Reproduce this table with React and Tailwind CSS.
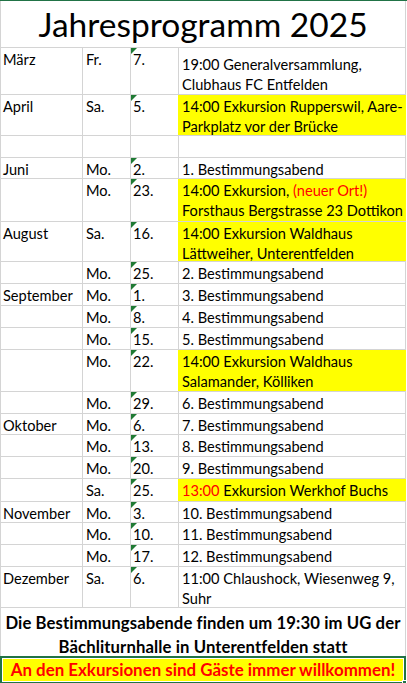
const grid = "border-[#d4d4d4]";

const rows = [
  { m: "März", d: "Fr.", n: "7.", h: 47, lines: ["19:00 Generalversammlung,", "Clubhaus FC Entfelden"], pt: "pt-[7px]" },
  { m: "April", d: "Sa.", n: "5.", h: 41, yellow: true, lines: ["14:00 Exkursion Rupperswil, Aare-", "Parkplatz vor der Brücke"] },
  { h: 22, empty: true },
  { m: "Juni", d: "Mo.", n: "2.", h: 21, lines: ["1. Bestimmungsabend"] },
  {
    d: "Mo.",
    n: "23.",
    h: 43,
    yellow: true,
    lines: [
      <>
        14:00 Exkursion, <span className="text-[#ff0000]">(neuer Ort!)</span>
      </>,
      "Forsthaus Bergstrasse 23 Dottikon",
    ],
  },
  { m: "August", d: "Sa.", n: "16.", h: 40, yellow: true, lines: ["14:00 Exkursion Waldhaus", "Lättweiher, Unterentfelden"] },
  { d: "Mo.", n: "25.", h: 22, lines: ["2. Bestimmungsabend"] },
  { m: "September", d: "Mo.", n: "1.", h: 22, lines: ["3. Bestimmungsabend"] },
  { d: "Mo.", n: "8.", h: 22, lines: ["4. Bestimmungsabend"] },
  { d: "Mo.", n: "15.", h: 22, lines: ["5. Bestimmungsabend"] },
  { d: "Mo.", n: "22.", h: 42, yellow: true, lines: ["14:00 Exkursion Waldhaus", "Salamander, Kölliken"] },
  { d: "Mo.", n: "29.", h: 22, lines: ["6. Bestimmungsabend"] },
  { m: "Oktober", d: "Mo.", n: "6.", h: 21, lines: ["7. Bestimmungsabend"] },
  { d: "Mo.", n: "13.", h: 22, lines: ["8. Bestimmungsabend"] },
  { d: "Mo.", n: "20.", h: 22, lines: ["9. Bestimmungsabend"] },
  {
    d: "Sa.",
    n: "25.",
    h: 23,
    yellow: true,
    lines: [
      <>
        <span className="text-[#ff0000]">13:00</span> Exkursion Werkhof Buchs
      </>,
    ],
  },
  { m: "November", d: "Mo.", n: "3.", h: 21, lines: ["10. Bestimmungsabend"] },
  { d: "Mo.", n: "10.", h: 22, lines: ["11. Bestimmungsabend"] },
  { d: "Mo.", n: "17.", h: 22, lines: ["12. Bestimmungsabend"] },
  { m: "Dezember", d: "Sa.", n: "6.", h: 41, lines: ["11:00 Chlaushock, Wiesenweg 9,", "Suhr"] },
];

function Row({ row }) {
  return (
    <div className={`flex border-b ${grid}`} style={{ height: row.h }}>
      <div className={`w-[82px] shrink-0 border-r ${grid} pl-[2px] pt-[2px]`}>{row.m}</div>
      <div className={`w-[48px] shrink-0 border-r ${grid} pl-[3px] pt-[2px]`}>{row.d}</div>
      <div
        className={`relative w-[48px] shrink-0 border-r pl-[2px] pt-[2px] ${
          row.yellow ? "border-[#ffff00]" : grid
        }`}
      >
        {!row.empty && (
          <span className="absolute left-0 top-0 h-0 w-0 border-t-[6px] border-r-[6px] border-t-[#1f7a34] border-r-transparent" />
        )}
        {row.n}
      </div>
      <div
        className={`w-[227px] shrink-0 border-r pl-[3px] ${row.pt || "pt-[2px]"} ${
          row.yellow ? "bg-[#ffff00] border-[#ffff00]" : grid
        }`}
      >
        {(row.lines || []).map((l, i) => (
          <div key={i} className="whitespace-nowrap">
            {l}
          </div>
        ))}
      </div>
    </div>
  );
}

export default function App() {
  return (
    <div className="w-[407px] h-[683px] overflow-hidden bg-white text-black font-['Lato','Noto_Sans',sans-serif] text-[14.6px] leading-[20px]">
      <div className="h-px bg-[#217346]" />
      <div className={`w-[406px] border-l ${grid}`}>
        <div className={`flex h-[47px] items-center justify-center border-b border-r ${grid} pt-[2px] text-[33.5px] leading-none`}>
          Jahresprogramm 2025
        </div>
        {rows.map((r, i) => (
          <Row key={i} row={r} />
        ))}
        <div className={`h-[48px] border-r ${grid} pt-[3px] text-center text-[16.7px] font-bold leading-[24px] tracking-[0.1px]`}>
          <div>Die Bestimmungsabende finden um 19:30 im UG der</div>
          <div>Bächliturnhalle in Unterentfelden statt</div>
        </div>
      </div>
      <div className="relative w-[406px] h-[28px] border-2 border-[#217346] bg-white p-px">
        <div className="flex h-full items-center justify-center bg-[#ffff00] text-[16.9px] font-bold text-[#ff0000]">
          An den Exkursionen sind Gäste immer willkommen!
        </div>
        <span className="absolute -right-[3px] -bottom-[3px] h-[5px] w-[5px] border border-white bg-[#217346]" />
      </div>
    </div>
  );
}
